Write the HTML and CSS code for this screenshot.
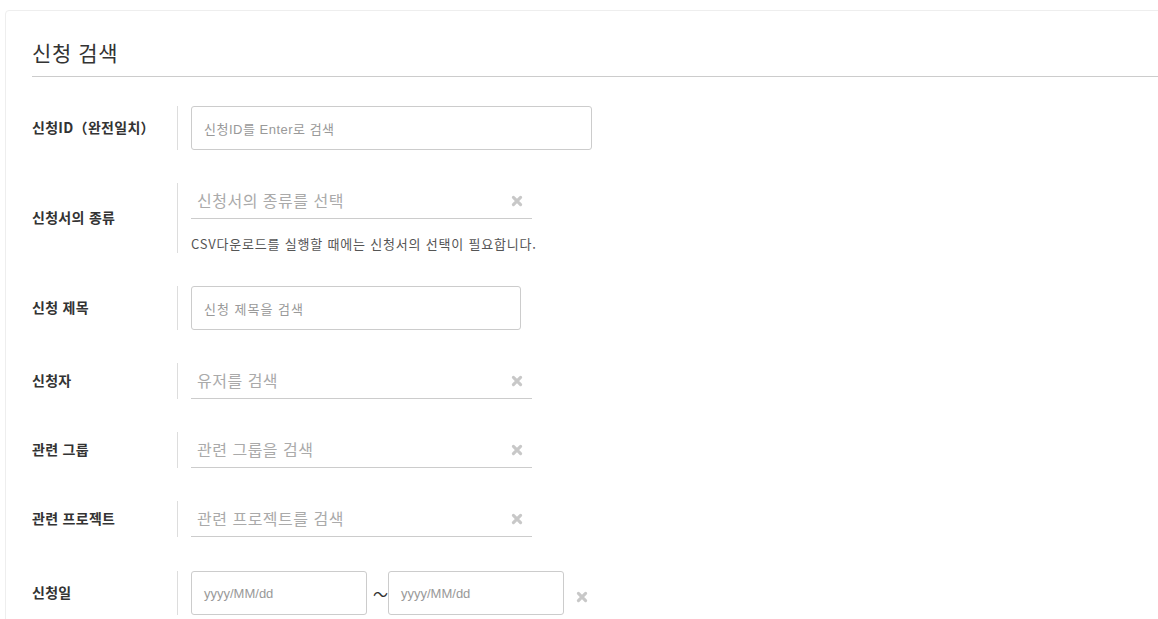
FILE: index.html
```html
<!DOCTYPE html>
<html lang="ko">
<head>
<meta charset="utf-8">
<title>신청 검색</title>
<link rel="stylesheet" href="styles.css">
</head>
<body>
<div class="card">
  <h2 class="title">신청 검색</h2>
  <div class="form">
    <div class="row">
      <div class="label">신청ID（완전일치）</div>
      <div class="field">
        <div class="input w400"><span class="ph mixed">신청ID를 Enter로 검색</span></div>
      </div>
    </div>
    <div class="row">
      <div class="label">신청서의 종류</div>
      <div class="field">
        <div class="select"><span class="sph">신청서의 종류를 선택</span><svg class="clear" viewBox="0 0 10 10"><path d="M2 2L8 8M8 2L2 8"/></svg></div>
        <div class="help">CSV다운로드를 실행할 때에는 신청서의 선택이 필요합니다.</div>
      </div>
    </div>
    <div class="row">
      <div class="label">신청 제목</div>
      <div class="field">
        <div class="input w329"><span class="ph ko">신청 제목을 검색</span></div>
      </div>
    </div>
    <div class="row">
      <div class="label">신청자</div>
      <div class="field">
        <div class="select"><span class="sph">유저를 검색</span><svg class="clear" viewBox="0 0 10 10"><path d="M2 2L8 8M8 2L2 8"/></svg></div>
      </div>
    </div>
    <div class="row">
      <div class="label">관련 그룹</div>
      <div class="field">
        <div class="select"><span class="sph">관련 그룹을 검색</span><svg class="clear" viewBox="0 0 10 10"><path d="M2 2L8 8M8 2L2 8"/></svg></div>
      </div>
    </div>
    <div class="row">
      <div class="label">관련 프로젝트</div>
      <div class="field">
        <div class="select"><span class="sph">관련 프로젝트를 검색</span><svg class="clear" viewBox="0 0 10 10"><path d="M2 2L8 8M8 2L2 8"/></svg></div>
      </div>
    </div>
    <div class="row last">
      <div class="label">신청일</div>
      <div class="field date">
        <div class="input w176"><span class="ph">yyyy/MM/dd</span></div>
        <span class="tilde">〜</span>
        <div class="input w176"><span class="ph">yyyy/MM/dd</span></div>
        <svg class="clear dclear" viewBox="0 0 10 10"><path d="M2 2L8 8M8 2L2 8"/></svg>
      </div>
    </div>
  </div>
</div>
</body>
</html>
```

FILE: styles.css
```css
html, body {
  margin: 0;
  padding: 0;
  background: #fff;
  overflow: hidden;
}
body {
  font-family: "Liberation Sans", "Noto Sans CJK KR", sans-serif;
  color: #333;
}
.card {
  margin: 10px -40px 0 5px;
  border: 1px solid #eeeeee;
  border-radius: 4px;
  padding: 27px 0 40px 26px;
  background: #fff;
}
.title {
  margin: 0;
  font-family: "Noto Sans CJK KR", sans-serif;
  font-size: 21px;
  font-weight: 400;
  letter-spacing: 0.6px;
  line-height: 28px;
  color: #333;
  padding-bottom: 10px;
  border-bottom: 1px solid #cccccc;
}
.form {
  margin-top: 29px;
  display: flex;
  flex-direction: column;
  gap: 33px;
}
.row {
  display: grid;
  grid-template-columns: 145px 1fr;
  align-items: center;
}
.row.last {
  margin-top: 1px;
}
.label {
  font-family: "Noto Sans CJK KR", sans-serif;
  font-size: 14px;
  font-weight: 700;
  letter-spacing: 0.3px;
  color: #333;
  margin-top: -2px;
}
.field {
  border-left: 1px solid #dddddd;
  padding-left: 13px;
  display: flex;
  flex-direction: column;
  align-items: flex-start;
}
.field.date {
  flex-direction: row;
  align-items: center;
}
.input {
  box-sizing: border-box;
  height: 44px;
  border: 1px solid #cccccc;
  border-radius: 3px;
  padding: 0 12px;
  display: flex;
  align-items: center;
}
.w400 { width: 401px; }
.w329 { width: 330px; }
.w176 { width: 176px; }
.ph {
  font-size: 13px;
  color: #999999;
}
.ph.mixed { letter-spacing: 0.5px; }
.ph.ko { letter-spacing: 1px; }
.select {
  box-sizing: border-box;
  width: 341px;
  height: 36px;
  border-bottom: 1px solid #cccccc;
  padding: 0 9px 0 6px;
  display: flex;
  align-items: center;
  justify-content: space-between;
}
.sph {
  font-family: "Noto Sans CJK KR", sans-serif;
  font-size: 16px;
  letter-spacing: 0.5px;
  color: #aaaaaa;
  margin-top: -2px;
}
.clear {
  width: 12px;
  height: 12px;
  fill: none;
  stroke: #c8c8c8;
  stroke-width: 2.6;
  stroke-linecap: round;
}
.help {
  margin-top: 16px;
  font-family: "Noto Sans CJK KR", sans-serif;
  font-size: 13px;
  letter-spacing: 0.8px;
  line-height: 18px;
  color: #555;
}
.tilde {
  width: 21px;
  text-align: right;
  font-family: "Noto Sans CJK KR", sans-serif;
  font-size: 15px;
  color: #333;
}
.dclear {
  margin-left: 12px;
  margin-top: 8px;
}
```
